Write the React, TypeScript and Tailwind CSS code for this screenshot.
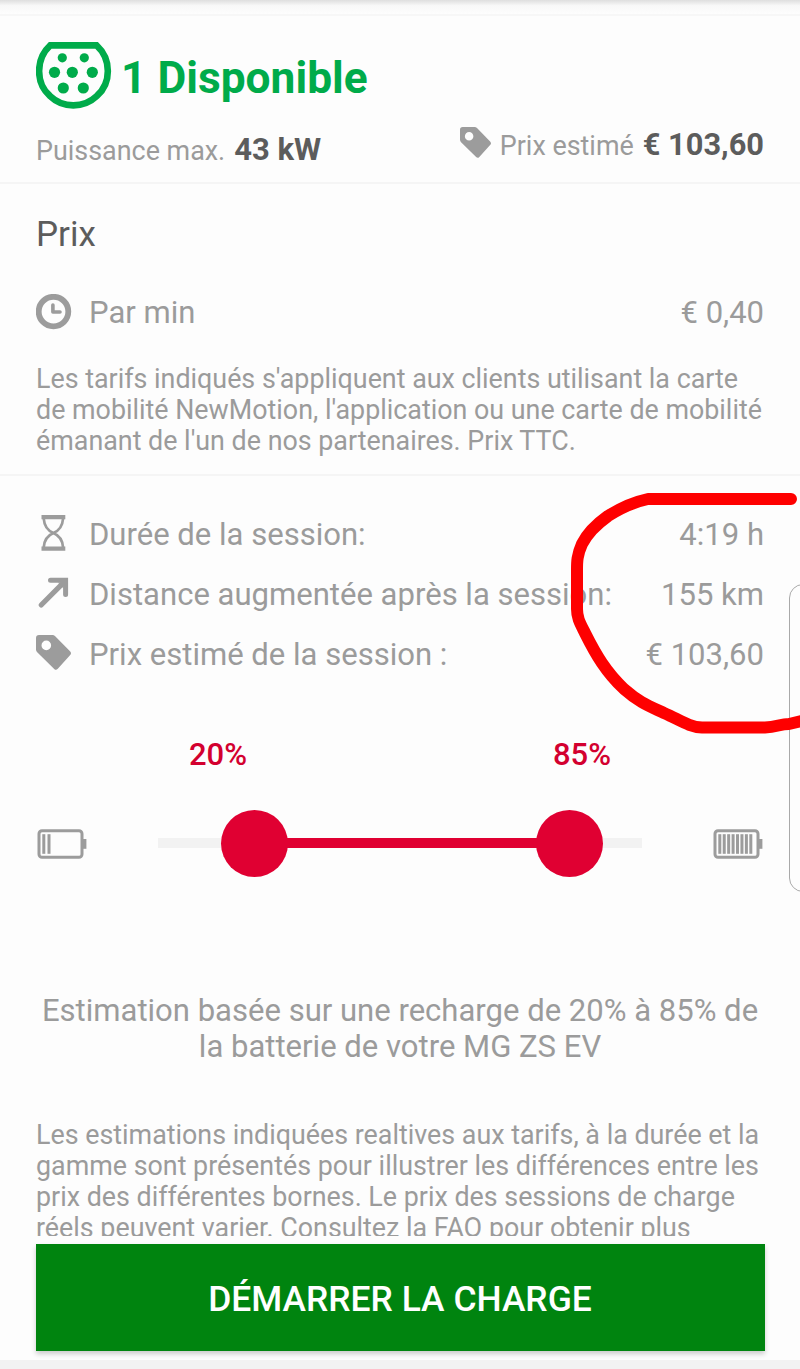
import React from "react";

const TAG_PATH = "M3 0H16.5Q18 0 19.2 1.2L34 16.3Q36 18.3 34 20.3L21.8 33.8Q20 35.7 18.2 33.9L1.2 17.2Q0 16 0 14.5V3Q0 0 3 0ZM10.3 5.6A4.8 4.8 0 1 0 10.3 15.2A4.8 4.8 0 1 0 10.3 5.6Z";

function TagIcon({ className }: { className: string }) {
  return (
    <svg viewBox="0 0 35 35" className={className} fill="#9c9c9c">
      <path fillRule="evenodd" d={TAG_PATH} />
    </svg>
  );
}

function ConnectorIcon() {
  return (
    <svg width="76" height="68" viewBox="0 0 76 68" className="shrink-0" fill="#00ab4a">
      <path
        d="M14.2 3.4H60.6C75.5 17 75.5 41 61 53.8C47.5 66.5 27 66.5 13.8 53.8C-0.5 41 -0.5 17 14.2 3.4Z"
        fill="none"
        stroke="#00ab4a"
        strokeWidth="6.6"
      />
      <circle cx="26.3" cy="15.8" r="4.6" />
      <circle cx="48.3" cy="15.8" r="4.6" />
      <circle cx="18.5" cy="30.3" r="5.6" />
      <circle cx="36.3" cy="30.3" r="5.6" />
      <circle cx="56.3" cy="30.3" r="5.6" />
      <circle cx="27.3" cy="46" r="5.6" />
      <circle cx="47.3" cy="46" r="5.6" />
    </svg>
  );
}

function ClockIcon() {
  return (
    <svg width="36" height="36" viewBox="0 0 36 36" className="-mt-px" fill="none" stroke="#9c9c9c">
      <circle cx="17.5" cy="17.6" r="14.8" strokeWidth="5.8" />
      <path d="M16.9 11V18H24" strokeWidth="3.6" strokeLinecap="round" strokeLinejoin="round" />
    </svg>
  );
}

function HourglassIcon() {
  return (
    <svg width="36" height="36" viewBox="0 0 36 36" className="-mt-[3px]" fill="none" stroke="#9c9c9c">
      <path d="M5.5 2.2H29.3M5.5 33.7H29.3" strokeWidth="4.2" />
      <path d="M7.8 4C8.3 11.5 12 15.7 17.4 18C22.8 15.7 26.5 11.5 27 4M7.8 32C8.3 25 12 20.3 17.4 18C22.8 20.3 26.5 25 27 32" strokeWidth="2.7" />
    </svg>
  );
}

function ArrowIcon() {
  return (
    <svg width="36" height="36" viewBox="0 0 36 36" fill="none" stroke="#9c9c9c" strokeLinecap="round">
      <path d="M5.2 29L27 7.2" strokeWidth="5.2" />
      <path d="M14.5 4.2H29.6V18.5" strokeWidth="5" />
      <path d="M22 6.5H27.5V12.5Z" fill="#9c9c9c" stroke="none" />
    </svg>
  );
}

function BatteryIcon({ bars, pitch }: { bars: number; pitch: number }) {
  return (
    <svg width="50" height="30" viewBox="0 0 50 30" className="mt-0.5" fill="#9c9c9c">
      <rect x="2" y="1.7" width="43" height="26.6" rx="3" fill="none" stroke="#9c9c9c" strokeWidth="3" />
      <rect x="46" y="10" width="3.4" height="9.8" />
      {Array.from({ length: bars }, (_, i) => (
        <rect key={i} x={5.3 + i * pitch} y="5.2" width="3" height="19.6" />
      ))}
    </svg>
  );
}

const SESSION_ROWS = [
  { icon: <HourglassIcon />, label: "Durée de la session:", value: "4:19 h" },
  { icon: <ArrowIcon />, label: "Distance augmentée après la session:", value: "155 km" },
  { icon: <TagIcon className="w-[35px] h-[35px] mr-px -mt-[3px]" />, label: "Prix estimé de la session :", value: "€ 103,60" },
];

export default function App() {
  return (
    <div className="relative w-[800px] h-[1369px] overflow-hidden flex flex-col bg-[#fdfdfd] text-[#9b9b9b] font-[Roboto,sans-serif]">
      <div className="h-4 shrink-0 border-b-2 border-[#f7f7f7] bg-linear-to-b from-[#dedede] via-[#f8f8f8] via-40% to-[#fdfdfd]" />

      {/* Availability */}
      <header className="h-[168px] shrink-0 px-9 pt-[26px] border-b-2 border-[#f5f5f5]">
        <div className="flex items-start gap-[9px] h-[68px]">
          <ConnectorIcon />
          <h1 className="text-[44.3px] leading-[72px] font-bold text-[#00ab4a] whitespace-nowrap">1 Disponible</h1>
        </div>
        <div className="flex justify-between items-start whitespace-nowrap">
          <p className="pt-[21px] leading-[38px] flex items-baseline gap-[9px]">
            <span className="text-[26.9px]">Puissance max.</span>
            <span className="text-[31px] font-bold text-[#5c5c5c]">43 kW</span>
          </p>
          <div className="pt-4 flex items-start gap-[9px]">
            <TagIcon className="w-[31px] h-[31px] mt-px" />
            <p className="leading-[38px] flex items-baseline gap-[9px]">
              <span className="text-[26.9px]">Prix estimé</span>
              <span className="text-[30.8px] font-bold text-[#5c5c5c]">€ 103,60</span>
            </p>
          </div>
        </div>
      </header>

      {/* Tariff */}
      <section className="h-[292px] shrink-0 px-9 pt-[29px] border-b-2 border-[#f5f5f5]">
        <h2 className="text-[35px] leading-[44px] text-[#5c5c5c]">Prix</h2>
        <div className="mt-[35px] h-[40px] flex items-center text-[31px]">
          <ClockIcon />
          <span className="ml-[17px] pt-0.5 flex-1">Par min</span>
          <span className="pt-0.5">€ 0,40</span>
        </div>
        <p className="mt-8 text-[26.85px] leading-[31px] whitespace-nowrap">
          Les tarifs indiqués s'appliquent aux clients utilisant la carte<br />
          de mobilité NewMotion, l'application ou une carte de mobilité<br />
          émanant de l'un de nos partenaires. Prix TTC.
        </p>
      </section>

      {/* Session estimate */}
      <section className="shrink-0 px-9 pt-7">
        {SESSION_ROWS.map((row) => (
          <div key={row.label} className="h-[60px] flex items-center text-[31.05px] whitespace-nowrap">
            {row.icon}
            <span className="ml-[17px] pt-0.5 flex-1">{row.label}</span>
            <span className="pt-0.5">{row.value}</span>
          </div>
        ))}
      </section>

      {/* Charge range */}
      <section className="shrink-0 px-[37px] mt-[50px]">
        <div className="flex justify-between px-[152px] text-[31px] leading-[41px] font-medium text-[#d3002f]">
          <span>20%</span>
          <span>85%</span>
        </div>
        <div className="mt-[33px] h-[70px] flex items-center justify-between">
          <BatteryIcon bars={2} pitch={5.2} />
          <div className="flex items-center w-[484px]">
            <div className="w-[63px] h-[10px] bg-[#f2f2f2]" />
            <div className="size-[67px] rounded-full bg-[#e00032]" />
            <div className="flex-1 h-[10px] -mx-px bg-[#e00032]" />
            <div className="size-[67px] rounded-full bg-[#e00032]" />
            <div className="w-[39px] h-[10px] bg-[#f2f2f2]" />
          </div>
          <BatteryIcon bars={8} pitch={4.43} />
        </div>
      </section>

      <p className="mt-[115px] shrink-0 text-center text-[31.05px] leading-[36px] whitespace-nowrap">
        Estimation basée sur une recharge de 20% à 85% de<br />
        la batterie de votre MG ZS EV
      </p>

      <p className="mt-[55px] h-[116px] shrink-0 overflow-hidden px-9 text-[26.85px] leading-[31px] whitespace-nowrap">
        Les estimations indiquées realtives aux tarifs, à la durée et la<br />
        gamme sont présentés pour illustrer les différences entre les<br />
        prix des différentes bornes. Le prix des sessions de charge<br />
        réels peuvent varier. Consultez la FAQ pour obtenir plus
      </p>

      <button className="mx-[35.5px] mt-2 h-[107px] pt-1 shrink-0 bg-[#00840f] text-white text-[35.4px] font-medium shadow-[0_3px_5px_rgba(0,0,0,0.2)]">
        DÉMARRER LA CHARGE
      </button>
      <div className="mt-auto h-[9px] shrink-0 bg-[#f2f2f2]" />

      {/* Edge panel handle */}
      <div className="absolute left-[789px] top-[584px] w-8 h-[308px] rounded-[14px] border border-[#a9a9a9]" />

      {/* Marker stroke around the totals */}
      <svg className="absolute left-0 top-0 pointer-events-none" width="800" height="1369" fill="none">
        <path
          d="M791 499H648C634 502 622 507 608 516C594 526 587 534 582 544C577 555 577 562 577 570V609C577 618 580 623 585 633C596 655 606 672 624 689C640 703 649 706 664 713C680 720 689 727 702 727.5H765C777 727 780 724 789 724L806 720"
          stroke="#fe0000"
          strokeWidth="12"
          strokeLinecap="round"
          strokeLinejoin="round"
        />
      </svg>
    </div>
  );
}
